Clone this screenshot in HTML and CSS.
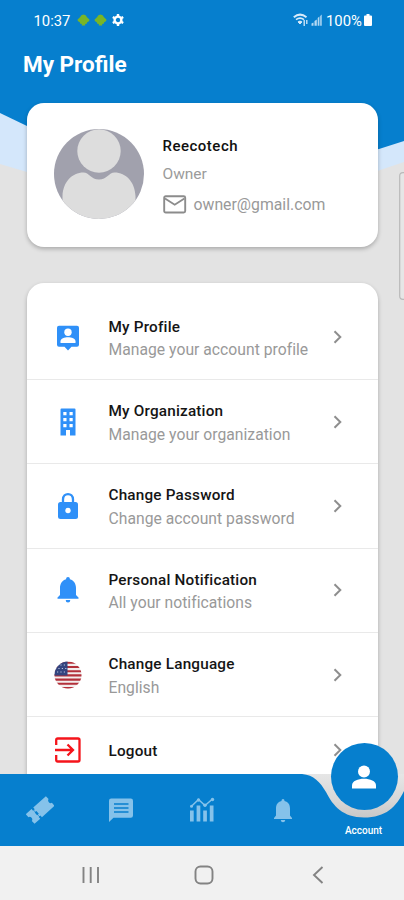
FILE: index.html
```html
<!DOCTYPE html>
<html lang="en">
<head>
<meta charset="utf-8">
<title>My Profile</title>
<link rel="stylesheet" href="styles.css">
</head>
<body>
<div class="screen">
  <svg class="backdrop" width="404" height="180" viewBox="0 0 404 180">
    <path d="M0 0H404V162L202 230L27 172L0 164Z" fill="#d4e7fb"/>
    <path d="M0 0H404V141L379 149L202 175L27 126L0 113Z" fill="#067fce"/>
  </svg>
  <header class="top">
    <div class="status">
      <span class="time">10:37</span>
      <svg class="droid" width="13" height="12" viewBox="0 0 13 12"><path d="M3 3.3Q4 .8 6.5.5Q9 .8 10 3.3L12.4 5.5L12.2 7L10 8.4V9.5L8.2 10V11.6H4.8V10L3 9.5V8.4L.8 7L.6 5.5Z" fill="#78b527"/></svg>
      <svg class="droid second" width="13" height="12" viewBox="0 0 13 12"><path d="M3 3.3Q4 .8 6.5.5Q9 .8 10 3.3L12.4 5.5L12.2 7L10 8.4V9.5L8.2 10V11.6H4.8V10L3 9.5V8.4L.8 7L.6 5.5Z" fill="#78b527"/></svg>
      <svg class="gear" width="12" height="12" viewBox="0 0 12 12"><circle cx="6" cy="6" r="3.4" fill="none" stroke="#fff" stroke-width="2.4"/><path d="M6 0V2M6 10V12M.8 3L2.5 4M9.5 8L11.2 9M.8 9L2.5 8M9.5 4L11.2 3" stroke="#fff" stroke-width="2.4"/></svg>
      <svg class="signal" width="30" height="14" viewBox="0 0 30 14">
        <g fill="none" stroke="#d6eafa"><path d="M.8 4.2Q7 -1 13.5 4.2" stroke-width="2"/><path d="M3 6.7Q7 3.6 11 6.7" stroke-width="1.6"/><path d="M5 8.9Q7 7.2 9 8.9L7 11Z" fill="#d6eafa"/><path d="M11.2 7V13M13.8 7V11" stroke-width="1.3"/></g>
        <path d="M18.5 12.8V10.5L20.5 9.5V12.8ZM21.5 12.8V8L23.8 6.5V12.8ZM24.7 12.8V5L26.4 3.6V12.8ZM27.2 12.8V3L28.7 1.5V12.8Z" fill="#b4d9f3"/>
      </svg>
      <span class="percent">100%</span>
      <svg class="battery" width="8" height="12" viewBox="0 0 8 12"><path d="M2.5 0H5.5V1.4H7Q8 1.4 8 2.4V11Q8 12 7 12H1Q0 12 0 11V2.4Q0 1.4 1 1.4H2.5Z" fill="#fff"/></svg>
    </div>
    <h1>My Profile</h1>
  </header>

  <section class="card user">
    <svg class="avatar" width="90" height="90" viewBox="0 0 90 90">
      <defs><clipPath id="round"><circle cx="45" cy="45" r="45"/></clipPath></defs>
      <g clip-path="url(#round)"><rect width="90" height="90" fill="#a1a1ad"/><circle cx="45" cy="22" r="21.7" fill="#ddd"/><path d="M8.500 90V67C9 53 18 43.500 29.500 43.500C35 43.500 37 50.500 45 50.500S55 43.500 60.500 43.500C72 43.500 81 53 81.500 67V90Z" fill="#ddd"/></g>
    </svg>
    <div class="facts">
      <div class="name">Reecotech</div>
      <div class="role">Owner</div>
      <div class="mail">
        <svg width="24" height="19" viewBox="0 0 24 19"><g fill="none" stroke="#8c8c8c" stroke-width="1.900"><rect x="1.200" y="1.200" width="21" height="16.300" rx="1.500"/><path d="M2 3.500L11.700 9.700L21.400 3.500"/></g></svg>
        <span>owner@gmail.com</span>
      </div>
    </div>
  </section>

  <main class="card list">
    <div class="row">
      <svg class="icon" width="28" height="28" viewBox="0 0 28 28"><path d="M5 2.700H23Q25 2.700 25 4.700V21.700Q25 23.700 23 23.700H17.500L14 27.500L10.500 23.700H5Q3 23.700 3 21.700V4.700Q3 2.700 5 2.700Z" fill="#2f90f8"/><circle cx="14" cy="9.300" r="3.700" fill="#fff"/><path d="M6.500 20V18.300C6.500 15.700 10.500 14.300 14 14.300S21.500 15.700 21.500 18.300V20Z" fill="#fff"/></svg>
      <div class="copy"><div class="label">My Profile</div><div class="hint">Manage your account profile</div></div>
      <svg class="chevron" width="10" height="14" viewBox="0 0 10 14"><path d="M1.500 1.300L7.300 7L1.500 12.700"/></svg>
    </div>
    <div class="row">
      <svg class="icon" width="28" height="28" viewBox="0 0 28 28"><path d="M7.500 .5H20.500Q21.500 .5 21.500 1.500V27.500H16V22H12V27.500H6.500V1.500Q6.500 .5 7.500 .5Z" fill="#2f90f8"/><path d="M9.300 4H12.500V7.200H9.300ZM15.500 4H18.700V7.200H15.500ZM9.300 10H12.500V13.200H9.300ZM15.500 10H18.700V13.200H15.500ZM9.300 16H12.500V19.200H9.300ZM15.500 16H18.700V19.200H15.500Z" fill="#fff"/></svg>
      <div class="copy"><div class="label">My Organization</div><div class="hint">Manage your organization</div></div>
      <svg class="chevron" width="10" height="14" viewBox="0 0 10 14"><path d="M1.500 1.300L7.300 7L1.500 12.700"/></svg>
    </div>
    <div class="row">
      <svg class="icon" width="28" height="28" viewBox="0 0 28 28"><path d="M9 11V7.500C9 .3 19 .3 19 7.500V11" fill="none" stroke="#2f90f8" stroke-width="2.300"/><rect x="4" y="10" width="20" height="17" rx="2.500" fill="#2f90f8"/><circle cx="14" cy="18.500" r="2.700" fill="#fff"/></svg>
      <div class="copy"><div class="label">Change Password</div><div class="hint">Change account password</div></div>
      <svg class="chevron" width="10" height="14" viewBox="0 0 10 14"><path d="M1.500 1.300L7.300 7L1.500 12.700"/></svg>
    </div>
    <div class="row">
      <svg class="icon" width="28" height="28" viewBox="0 0 28 28"><path d="M14 1C15.200 1 15.900 1.800 15.900 3.200C20 4.300 22 8 22 12V19L24.500 21.500V22.700H3.500V21.500L6 19V12C6 8 8 4.300 12.100 3.200C12.100 1.800 12.800 1 14 1ZM11.700 24H16.300Q16.300 26.500 14 26.500T11.700 24Z" fill="#2f90f8"/></svg>
      <div class="copy"><div class="label">Personal Notification</div><div class="hint">All your notifications</div></div>
      <svg class="chevron" width="10" height="14" viewBox="0 0 10 14"><path d="M1.500 1.300L7.300 7L1.500 12.700"/></svg>
    </div>
    <div class="row">
      <svg class="icon" width="28" height="28" viewBox="0 0 28 28"><defs><clipPath id="flag"><circle cx="14" cy="14" r="13.500"/></clipPath></defs><g clip-path="url(#flag)"><rect width="28" height="28" fill="#f3eded"/><path d="M0 1.800H28M0 6H28M0 10.200H28M0 14.400H28M0 18.600H28M0 22.800H28M0 27H28" stroke="#b3303a" stroke-width="2.100"/><rect width="13.500" height="14.500" fill="#34457f"/><path d="M3 4H13M1 7.500H13M3 11H13" stroke="#b9c2df" stroke-width="1.100" stroke-dasharray="1.200 2.200"/></g></svg>
      <div class="copy"><div class="label">Change Language</div><div class="hint">English</div></div>
      <svg class="chevron" width="10" height="14" viewBox="0 0 10 14"><path d="M1.500 1.300L7.300 7L1.500 12.700"/></svg>
    </div>
    <div class="row last">
      <svg class="icon" width="28" height="28" viewBox="0 0 28 28"><g fill="none" stroke="#f5141b" stroke-width="2.300"><path d="M2.200 9V4Q2.200 2.500 3.700 2.500H24Q25.500 2.500 25.500 4V24Q25.500 25.500 24 25.500H3.700Q2.200 25.500 2.200 24V19"/><path d="M1 14H18.500M13.500 8.500L19 14L13.500 19.500"/></g></svg>
      <div class="copy"><div class="label">Logout</div></div>
      <svg class="chevron" width="10" height="14" viewBox="0 0 10 14"><path d="M1.500 1.300L7.300 7L1.500 12.700"/></svg>
    </div>
  </main>

  <svg class="handle" width="5" height="128" viewBox="0 0 5 128"><path d="M6 .7H4Q.7 .7 .7 4V124Q.7 127.300 4 127.300H6" fill="#e6e6e6" stroke="#b9b9b9" stroke-width="1.200"/></svg>

  <footer class="dock">
    <nav class="tabs">
      <svg class="wave" width="404" height="72" viewBox="0 0 404 72">
        <defs><linearGradient id="shade" x1="0" y1="0" x2="0" y2="1"><stop offset="0" stop-color="#e6e6e6"/><stop offset=".5" stop-color="#d8d8d8"/><stop offset="1" stop-color="#c2c2c2"/></linearGradient></defs>
        <rect x="300" width="104" height="50" fill="url(#shade)"/>
        <path d="M0 0H302C314 1 320 8 326 18C333 32 343 43.500 364 43.500C386 43.500 396 33 404 17V72H0Z" fill="#067fce"/>
      </svg>
      <svg class="tab" width="28" height="28" viewBox="0 0 28 28"><g transform="translate(14.200 14) rotate(-42)" fill="#85c2ea"><path d="M-3.500-6.500H13.500V-2.500A2.600 2.600 0 0 0 13.500 2.500V6.500H-3.500V4.200H-4.800V1.800H-3.500V-1.800H-4.800V-4.200H-3.500Z"/><path d="M-5.800-6.500H-13.500V-2.500A2.600 2.600 0 0 1-13.500 2.500V6.500H-5.800V4.200H-5.200V1.800H-5.800V-1.800H-5.200V-4.200H-5.800Z"/></g></svg>
      <svg class="tab" width="28" height="28" viewBox="0 0 28 28"><path d="M4.200 2.500H23.800Q26 2.500 26 4.700V19.500Q26 21.700 23.800 21.700H6.500L2 26V4.700Q2 2.500 4.200 2.500Z" fill="#85c2ea"/><path d="M7 8H21.500M7 12H21.500M7 16H21.500" stroke="#067fce" stroke-width="1.700"/></svg>
      <svg class="tab" width="28" height="28" viewBox="0 0 28 28"><path d="M2 14.500H5.700V25.500H2ZM8.600 9.500H12.300V25.500H8.600ZM15.200 14.500H18.900V25.500H15.200ZM21.800 9.500H25.500V25.500H21.800Z" fill="#85c2ea"/><path d="M3.200 10.500L10.500 3.500L17 9.500L24.500 3" fill="none" stroke="#85c2ea" stroke-width="1.500"/><g fill="#85c2ea"><circle cx="3.500" cy="10.300" r="1.500"/><circle cx="10.500" cy="4" r="1.700"/><circle cx="17" cy="9.300" r="1.700"/><circle cx="24.500" cy="3.500" r="1.700"/></g></svg>
      <svg class="tab" width="28" height="28" viewBox="0 0 28 28"><path d="M14 3C15 3 15.500 3.700 15.500 5C19.500 6 21 9 21 12.500V19.500L23 22V23H5V22L7 19.500V12.500C7 9 8.500 6 12.500 5C12.500 3.700 13 3 14 3ZM11.700 24H16.300Q16 26.200 14 26.200T11.700 24Z" fill="#85c2ea"/></svg>
      <div class="tab account">Account</div>
      <div class="bubble"><svg width="26" height="24" viewBox="0 0 26 24"><circle cx="13" cy="6.500" r="6" fill="#fff"/><path d="M1 23.500V20.500C1 16 7 13.800 13 13.800S25 16 25 20.500V23.500Z" fill="#fff"/></svg></div>
    </nav>
    <div class="system">
      <svg width="18" height="18" viewBox="0 0 18 18"><path d="M1.500 1V17M8.700 1V17M16 1V17" stroke="#838383" stroke-width="1.900"/></svg>
      <svg class="home" width="20" height="20" viewBox="0 0 20 20"><rect x="1.500" y="1.500" width="17" height="17" rx="5" fill="none" stroke="#838383" stroke-width="1.900"/></svg>
      <svg width="12" height="18" viewBox="0 0 12 18"><path d="M10.500 1L2 9L10.500 17" fill="none" stroke="#838383" stroke-width="1.900"/></svg>
    </div>
  </footer>
</div>
</body>
</html>
```
FILE: styles.css
```css
* { box-sizing: border-box; }
body { margin: 0; font-family: Roboto, sans-serif; }
svg { display: block; flex: none; }
.screen { position: relative; width: 404px; height: 900px; overflow: hidden; background: #e3e3e3; }
.backdrop { position: absolute; left: 0; top: 0; }
.top { position: relative; height: 102.500px; color: #fff; }
.status { display: flex; align-items: center; height: 40px; padding: 0 32px 0 33.500px; }
.time, .percent { font-size: 14.800px; line-height: 20px; padding-top: 1px; }
.time { width: 43px; }
.second { margin-left: 4px; }
.gear { margin-left: 5px; }
.signal { margin-left: auto; }
.percent { margin-left: 3px; width: 38px; }
h1 { margin: 8px 0 0 23px; font-size: 22.500px; line-height: 32px; font-weight: 700; }
.card { position: relative; width: 351px; margin-left: 27px; background: #fff; border-radius: 17px; box-shadow: 0 2px 4px rgba(0,0,0,.25); }
.user { height: 144px; display: flex; padding: 26.500px 0 0 27px; }
.facts { margin-left: 18.500px; padding-top: 7px; }
.name { font-size: 15px; line-height: 20px; font-weight: 500; color: #101010; letter-spacing: .5px; }
.role { margin-top: 8px; font-size: 15.500px; line-height: 20px; color: #9b9b9b; }
.mail { display: flex; align-items: center; gap: 7px; margin-top: 9px; height: 22px; font-size: 15.800px; color: #999; }
.list { height: 560px; margin-top: 36px; padding-top: 13px; }
.row { display: flex; align-items: center; height: 84.400px; padding: 0 35.500px 0 27px; border-bottom: 1.500px solid #e9e9e9; }
.last { height: 65px; border: 0; }
.icon { margin-right: 26.500px; }
.copy { flex: 1; white-space: nowrap; padding-top: 2.500px; }
.label { font-size: 15.300px; line-height: 20px; font-weight: 500; color: #151515; letter-spacing: .19px; }
.hint { margin-top: 3.500px; font-size: 15.700px; line-height: 20px; color: #999; letter-spacing: .02px; }
.chevron { fill: none; stroke: #8e8e8e; stroke-width: 2; }
.handle { position: absolute; right: 0; top: 172px; }
.dock { position: absolute; left: 0; bottom: 0; width: 404px; }
.tabs { position: relative; display: grid; grid-template-columns: repeat(5, 80.800px); height: 72px; justify-items: center; align-items: center; }
.wave { position: absolute; left: 0; top: 0; }
.tab { position: relative; }
.account { align-self: end; padding-bottom: 8px; font-size: 10px; line-height: 14px; font-weight: 500; color: #fff; }
.bubble { position: absolute; left: 330.500px; top: -31px; width: 67px; height: 67px; border-radius: 50%; background: #067fce; display: flex; align-items: center; justify-content: center; }
.system { height: 54px; padding: 4px 80px 0 82px; display: flex; align-items: center; justify-content: space-between; background: #f1f1f1; }
.home { margin-right: 4px; }
```
